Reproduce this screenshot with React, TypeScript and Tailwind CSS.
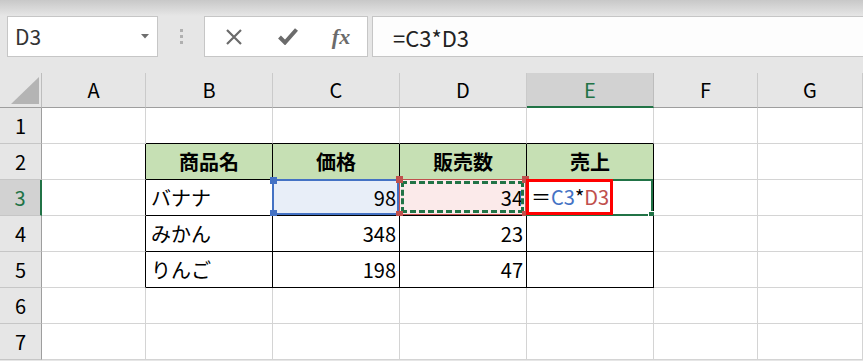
const COLS = ['A', 'B', 'C', 'D', 'E', 'F', 'G']
const ROWS = [1, 2, 3, 4, 5, 6, 7]

type Cell = { v: string; kind: 'head' | 'text' | 'num' }

const cells: Record<string, Cell> = {
  B2: { v: '商品名', kind: 'head' },
  C2: { v: '価格', kind: 'head' },
  D2: { v: '販売数', kind: 'head' },
  E2: { v: '売上', kind: 'head' },
  B3: { v: 'バナナ', kind: 'text' },
  C3: { v: '98', kind: 'num' },
  D3: { v: '34', kind: 'num' },
  B4: { v: 'みかん', kind: 'text' },
  C4: { v: '348', kind: 'num' },
  D4: { v: '23', kind: 'num' },
  B5: { v: 'りんご', kind: 'text' },
  C5: { v: '198', kind: 'num' },
  D5: { v: '47', kind: 'num' },
}

const inTable = (c: number, r: number) => c >= 1 && c <= 4 && r >= 2 && r <= 5

function Handle({ pos, color }: { pos: string; color: string }) {
  return <span className={`absolute h-[7px] w-[7px] ${pos} ${color}`} />
}

function CellBox({ ci, r }: { ci: number; r: number }) {
  const key = `${COLS[ci]}${r}`
  const cell = cells[key]
  const right = inTable(ci, r) || inTable(ci + 1, r) ? 'border-r-black' : 'border-r-[#d4d4d4]'
  const bottom = inTable(ci, r) || inTable(ci, r + 1) ? 'border-b-black' : 'border-b-[#d4d4d4]'
  let bg = 'bg-white'
  if (cell?.kind === 'head') bg = 'bg-[#c6e0b4]'
  if (key === 'C3') bg = 'bg-[#e8eef8]'
  if (key === 'D3') bg = 'bg-[#fbeaea]'

  let align = 'justify-start pl-[5px]'
  if (cell?.kind === 'num') align = 'justify-end pr-[3px]'
  if (cell?.kind === 'head') align = 'justify-center font-bold'

  return (
    <div className={`relative flex items-center border-r border-b text-[20px] text-black ${right} ${bottom} ${bg} ${align}`}>
      {cell && <span className="leading-none">{cell.v}</span>}
      {key === 'C3' && (
        <div className="absolute -left-px -top-px right-0 bottom-0 border-2 border-[#4472c4]">
          <Handle pos="-left-[4px] -top-[4px]" color="bg-[#4472c4]" />
          <Handle pos="-left-[4px] -bottom-[4px]" color="bg-[#4472c4]" />
        </div>
      )}
      {key === 'D3' && (
        <div className="absolute -left-px -top-px right-0 bottom-0 border border-[#c0504d]">
          <div className="absolute inset-[1px] border-[3px] border-dashed border-[#217346]" />
          <Handle pos="-left-[4px] -top-[4px]" color="bg-[#c0504d]" />
          <Handle pos="-left-[4px] -bottom-[4px]" color="bg-[#c0504d]" />
          <Handle pos="-right-[4px] -top-[4px]" color="bg-[#c0504d]" />
          <Handle pos="-right-[4px] -bottom-[4px]" color="bg-[#c0504d]" />
        </div>
      )}
      {key === 'E3' && (
        <>
          <div className="absolute -left-px -top-px right-0 -bottom-px border-2 border-[#217346]">
            <span className="absolute -bottom-[4px] -right-[4px] h-[7px] w-[7px] border border-white bg-[#217346]" />
          </div>
          <div className="absolute -left-px -top-px bottom-0 flex w-[87px] items-center border-[3px] border-[#ff0000] pl-[2px]">
            <span className="leading-none">
              ＝<span className="text-[#4472c4]">C3</span>*<span className="text-[#c0504d]">D3</span>
            </span>
          </div>
        </>
      )}
    </div>
  )
}

export default function App() {
  return (
    <div
      className="h-[361px] w-[863px] overflow-hidden bg-[#e6e6e6] text-black"
      style={{ fontFamily: '"Noto Sans CJK JP", "Noto Sans", sans-serif' }}
    >
      {/* formula bar */}
      <div className="flex h-[73px] items-start bg-[linear-gradient(#c8c8c8,#e6e6e6_16px)] pt-[16px]">
        <div className="ml-[7px] flex h-[41px] w-[151px] items-center justify-between border border-[#c6c6c6] bg-white pl-[7px] pr-[8px]">
          <span className="text-[21px] leading-none text-[#333]">D3</span>
          <svg width="8" height="5" viewBox="0 0 8 5">
            <path d="M0 0h8L4 4.5z" fill="#6e6e6e" />
          </svg>
        </div>
        <div className="flex h-[41px] w-[46px] flex-col items-center justify-center gap-[3px]">
          <span className="h-[3px] w-[3px] bg-[#b0b0b0]" />
          <span className="h-[3px] w-[3px] bg-[#b0b0b0]" />
          <span className="h-[3px] w-[3px] bg-[#b0b0b0]" />
        </div>
        <div className="flex h-[41px] w-[164px] items-center border border-[#c6c6c6] bg-white">
          <div className="flex w-[56px] justify-center pl-[2px]">
            <svg width="18" height="18" viewBox="0 0 18 18">
              <path d="M2 2L16 16M16 2L2 16" stroke="#6b6b6b" strokeWidth="2.2" />
            </svg>
          </div>
          <div className="flex w-[54px] justify-center">
            <svg width="20" height="17" viewBox="0 0 20 17">
              <path d="M1.5 9L7 14.5L18.5 1.5" stroke="#6b6b6b" strokeWidth="4" fill="none" />
            </svg>
          </div>
          <div className="flex w-[52px] justify-center">
            <span
              className="text-[22px] font-bold italic leading-none text-[#6b6b6b]"
              style={{ fontFamily: '"Liberation Serif", serif' }}
            >
              fx
            </span>
          </div>
        </div>
        <div className="ml-[4px] flex h-[41px] flex-1 items-center border-y border-l border-[#c6c6c6] bg-[#fdfdfd] pl-[20px]">
          <span className="text-[22px] leading-none text-[#222]">=C3*D3</span>
        </div>
      </div>

      {/* sheet grid */}
      <div className="grid grid-cols-[42px_104px_127px_127px_127px_127px_104px_1fr] grid-rows-[35px_repeat(7,36px)]">
        <div className="relative border-r border-b border-r-[#bdbdbd] border-b-[#9e9e9e] bg-[#e6e6e6]">
          <svg className="absolute right-[2px] bottom-[3px]" width="28" height="27" viewBox="0 0 28 27">
            <path d="M28 0V27H0z" fill="#b4b4b4" />
          </svg>
        </div>
        {COLS.map((c) =>
          c === 'E' ? (
            <div
              key={c}
              className="flex items-center justify-center border-r border-b-2 border-r-[#bdbdbd] border-b-[#217346] bg-[#d2d2d2] text-[20px] text-[#217346]"
            >
              {c}
            </div>
          ) : (
            <div
              key={c}
              className="flex items-center justify-center border-r border-b border-r-[#cacaca] border-b-[#9e9e9e] text-[20px] text-black"
            >
              {c}
            </div>
          ),
        )}
        {ROWS.map((r) => [
          r === 3 ? (
            <div
              key={`h${r}`}
              className="flex items-center justify-center border-r-2 border-b border-r-[#217346] border-b-[#c6c6c6] bg-[#d2d2d2] text-[20px] text-[#217346]"
            >
              {r}
            </div>
          ) : (
            <div
              key={`h${r}`}
              className="flex items-center justify-center border-r border-b border-r-[#9e9e9e] border-b-[#c6c6c6] text-[20px] text-black"
            >
              {r}
            </div>
          ),
          ...COLS.map((_, ci) => <CellBox key={`${ci}-${r}`} ci={ci} r={r} />),
        ])}
      </div>
    </div>
  )
}
